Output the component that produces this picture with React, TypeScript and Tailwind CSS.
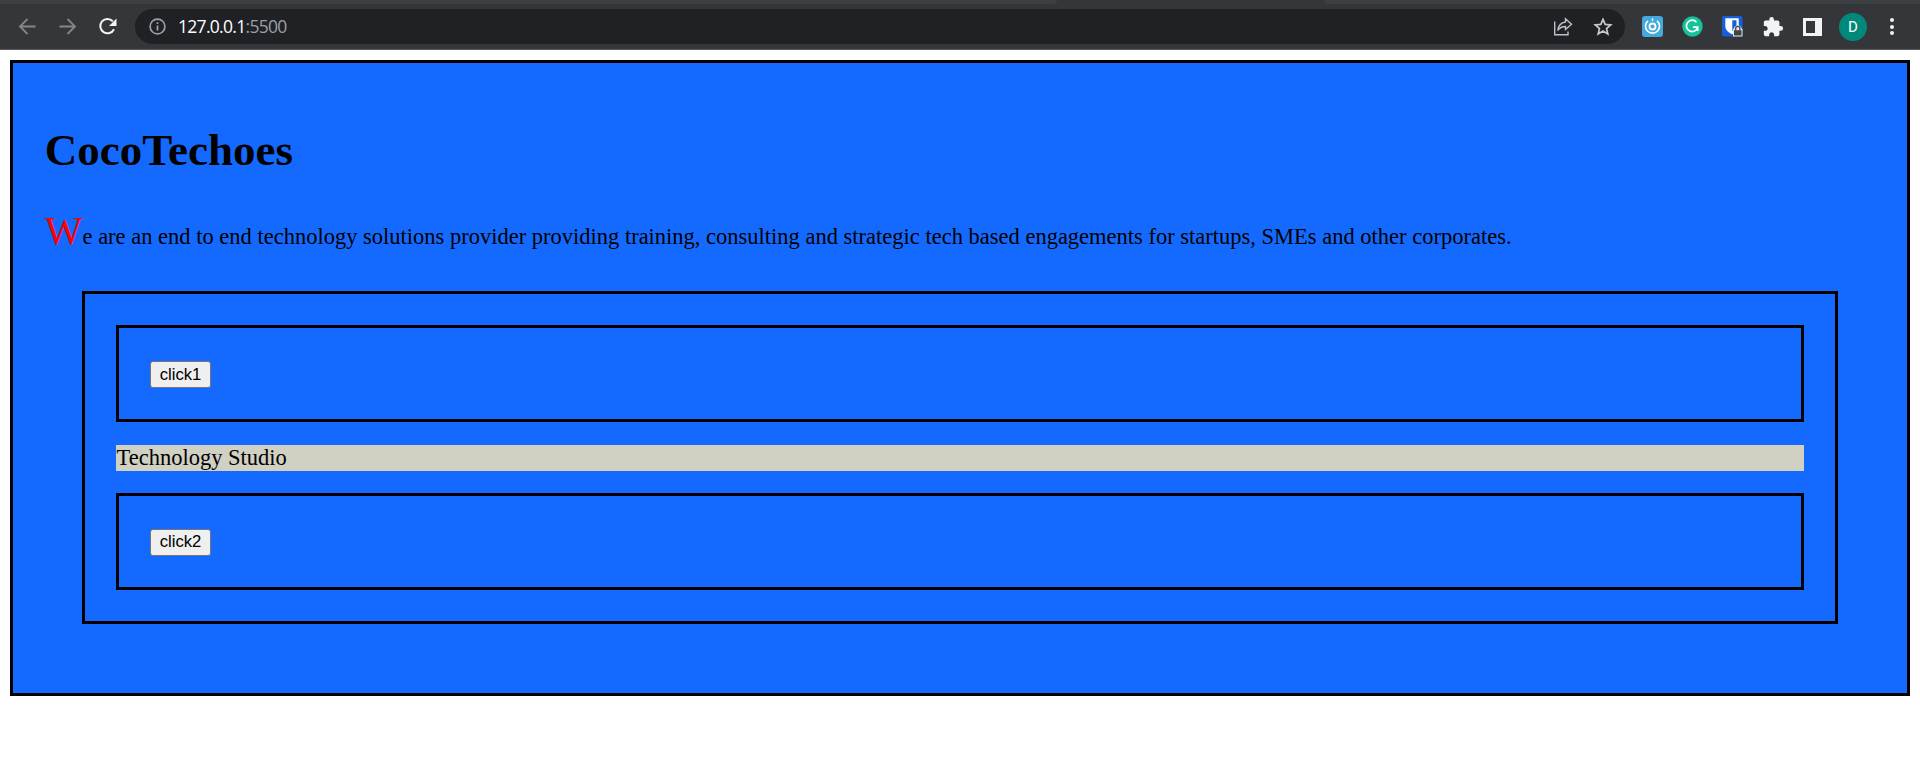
import React from 'react';

function Toolbar() {
  return (
    <header className="h-[50px] flex flex-col bg-[#35363a] border-b border-[#5b5a5e]">
      <div className="h-1 shrink-0 flex justify-between">
        <div className="w-[1057px] bg-[#3c4043] rounded-br-[8px]" />
        <div className="w-[596px] bg-[#3c4043] rounded-bl-[8px]" />
      </div>
      <div className="h-[45px] flex items-center">
        <div className="w-[135px] shrink-0 flex items-center">
          <svg className="ml-[18px] shrink-0" width="20" height="20" viewBox="0 0 20 20" fill="none" stroke="#85868a" strokeWidth="1.8">
            <path d="M17.5 9.5H2.5M9.5 2L2 9.5L9.5 17" />
          </svg>
          <svg className="ml-5 shrink-0" width="20" height="20" viewBox="0 0 20 20" fill="none" stroke="#85868a" strokeWidth="1.8">
            <path d="M1.5 9.5H16.5M9.5 2L17 9.5L9.5 17" />
          </svg>
          <svg className="ml-5 shrink-0" width="20" height="20" viewBox="0 0 20 20">
            <path d="M14.8 4.2A7.2 7.2 0 1 0 16 12.2" fill="none" stroke="#f1f3f4" strokeWidth="2" />
            <path d="M18.5 1.500V9H11Z" fill="#f1f3f4" />
          </svg>
        </div>
        <div className="w-[1490px] shrink-0 h-[35px] rounded-full bg-[#202124] flex items-center">
          <svg className="ml-[14px] shrink-0" width="17" height="17" viewBox="0 0 17 17">
            <circle cx="8.5" cy="8.5" r="7.4" fill="none" stroke="#9aa0a6" strokeWidth="1.7" />
            <path d="M8.5 7.6V12.6M8.5 4.3V6" stroke="#9aa0a6" strokeWidth="1.8" />
          </svg>
          <div className="ml-[12px] font-['Open_Sans','Noto_Sans',sans-serif] text-[17.5px] leading-[35px] text-white whitespace-nowrap tracking-[-0.7px]">
            127.0.0.1<span className="text-[#9aa0a6]">:5500</span>
          </div>
          <svg className="ml-auto shrink-0" width="20" height="20" viewBox="0 0 20 20" fill="none" stroke="#bdc1c6" strokeWidth="1.4">
            <path d="M1.7 4.5V17.7H15V14.5" />
            <path d="M12.5 1.8L18.5 7.2L12.5 12.5V9.5C9 9.5 6.5 10.8 4.8 13.5C5.3 9 8 5.6 12.5 5Z" />
          </svg>
          <svg className="ml-5 mr-[12px] shrink-0" width="20" height="20" viewBox="0 0 20 20" fill="none" stroke="#c8cacd" strokeWidth="1.7">
            <path d="M10 2.300L12.200 7.400L17.700 7.900L13.500 11.500L14.800 16.900L10 14L5.200 16.900L6.500 11.500L2.300 7.900L7.800 7.400Z" />
          </svg>
        </div>
        <svg className="ml-[17px] shrink-0" width="21" height="21" viewBox="0 0 21 21" fill="none">
          <rect x="0" y="0" width="21" height="21" rx="3" fill="#45aadb" />
          <path d="M6 4.800A7 7 0 1 0 15 4.800" stroke="white" strokeWidth="1.6" />
          <circle cx="10.5" cy="10.5" r="3" stroke="white" strokeWidth="1.8" />
          <path d="M10.500 2.500V4.800" stroke="white" strokeWidth="1.500" />
        </svg>
        <svg className="ml-[19px] shrink-0" width="21" height="21" viewBox="0 0 21 21" fill="none">
          <circle cx="10.5" cy="10.5" r="10.2" fill="#15c39a" />
          <path d="M14.500 6.200A5.700 5.700 0 1 0 15.700 11.200M11 11.200H15.700V15" stroke="white" strokeWidth="1.700" />
        </svg>
        <svg className="ml-[19px] shrink-0" width="21" height="21" viewBox="0 0 21 21">
          <rect width="20.5" height="20.5" rx="2" fill="#175ddc" />
          <path d="M3.300 2.200H16.700V10C16.700 14 13.500 16.500 10 18.200C6.500 16.500 3.300 14 3.300 10Z" fill="white" />
          <path d="M10.300 4.300H14.500V10C14.500 12.200 12.800 13.700 10.300 15Z" fill="#175ddc" />
          <path d="M11 20.500V13.500L13 10.500Q15.700 8 18.500 10.500L20.500 13.500V20.500Z" fill="#e6e6e6" />
          <rect x="12" y="14.200" width="7.500" height="5.300" fill="#424242" />
          <path d="M13.700 14.200V12.500A2.100 2.100 0 0 1 17.900 12.500V14.200" fill="none" stroke="#424242" strokeWidth="1.300" />
        </svg>
        <svg className="ml-[19px] shrink-0" width="22" height="22" viewBox="0 0 24 24" fill="#f1f3f4">
          <path d="M20.500 11H19V7c0-1.100-.9-2-2-2h-4V3.500a2.500 2.500 0 0 0-5 0V5H4c-1.100 0-1.990.9-1.990 2v3.800H3.500c1.490 0 2.700 1.210 2.700 2.700s-1.210 2.700-2.700 2.700H2V20c0 1.100.9 2 2 2h3.800v-1.500c0-1.490 1.210-2.700 2.700-2.700 1.490 0 2.700 1.210 2.700 2.700V22H17c1.100 0 2-.9 2-2v-4h1.500a2.500 2.500 0 0 0 0-5z" />
        </svg>
        <div className="ml-[19px] w-[19px] h-[18px] shrink-0 border-[#f1f3f4] border-t-[3px] border-b-[3px] border-l-[3px] border-r-[7px]" />
        <div className="ml-[17px] size-7 shrink-0 rounded-full bg-[#00897b] text-white text-[15px] leading-7 text-center font-[Roboto,sans-serif]">D</div>
        <div className="ml-[23px] flex flex-col gap-[2.500px]">
          <i className="size-[4px] rounded-full bg-[#f1f3f4]" />
          <i className="size-[4px] rounded-full bg-[#f1f3f4]" />
          <i className="size-[4px] rounded-full bg-[#f1f3f4]" />
        </div>
      </div>
    </header>
  );
}

function ClickBox({ label, lineHeight }: { label: string; lineHeight: string }) {
  return (
    <div className="h-[97px] border-[3px] border-black pl-[31px] pt-[33px]">
      <button className={`flex items-start justify-center w-[61px] h-[27px] rounded-[3px] border border-[#767676] bg-[#efefef] text-black font-['Liberation_Sans',Arial,sans-serif] text-[16.667px] ${lineHeight}`}>
        {label}
      </button>
    </div>
  );
}

export default function App() {
  return (
    <div className="w-full h-[757px] bg-white overflow-hidden">
      <Toolbar />
      <main className="mx-[10px] mt-[10px] h-[636px] border-[3px] border-black bg-[#146aff] text-black px-[31.250px] font-['Liberation_Serif','Times_New_Roman',serif]">
        <h1 className="pt-[61px] pl-[0.5px] text-[45px] leading-[52px] font-bold">CocoTechoes</h1>
        <p className="mt-[35px] h-[52px] pl-[0.5px] text-[22.500px] leading-[52px] whitespace-nowrap">
          <span className="text-[40px] leading-none text-[#ff0000]">W</span>
          e are an end to end technology solutions provider providing training, consulting and strategic tech based engagements for startups, SMEs and other corporates.
        </p>
        <section className="mt-[28px] mx-[37.750px] h-[333px] border-[3px] border-black px-[31px] pt-[31px]">
          <ClickBox label="click1" lineHeight="leading-[25px]" />
          <p className="mt-[23px] mb-[22px] h-[26px] pl-[0.5px] bg-[#d0d1c2] text-[22.500px] leading-[26px]">Technology Studio</p>
          <ClickBox label="click2" lineHeight="leading-[23px]" />
        </section>
      </main>
    </div>
  );
}
